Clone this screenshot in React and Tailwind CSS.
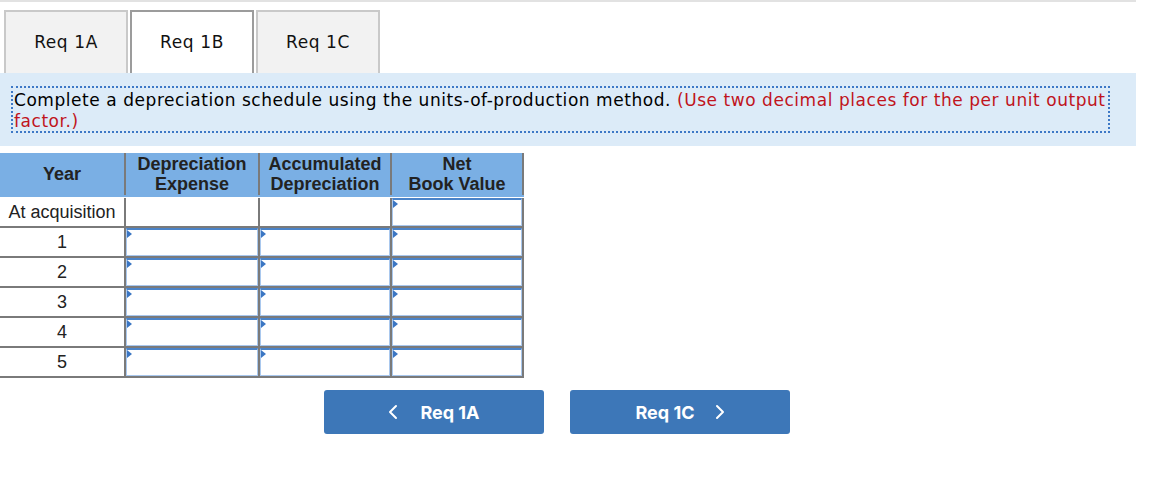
import React from "react";

const GRAY = "border-[#7a7a7a]";

const Flag = () => (
  <span className="absolute left-0 top-0 w-0 h-0 border-y-[4px] border-y-transparent border-l-[5px] border-l-[#3b76c3]" />
);

const InputBox = () => (
  <div className="relative h-full w-full border border-[#a9c8ee] border-t-2 border-t-[#4a83c8] bg-white">
    <Flag />
  </div>
);

const Tab = ({ label, active }) => (
  <div
    className={`w-[124px] h-[63px] flex items-center justify-center border-2 border-b-0 text-[17px] tracking-[0.6px] text-[#111] ${
      active ? "bg-white border-[#9c9c9c]" : "bg-[#f2f2f2] border-[#c9c9c9]"
    }`}
  >
    {label}
  </div>
);

const DataRow = ({ label, first }) => (
  <div className={`flex h-[30px] border-b-2 ${GRAY}`}>
    <div className="w-[124px] flex items-center justify-center bg-white">{label}</div>
    <div className={`w-[134px] border-l-2 ${GRAY} bg-white`}>{!first && <InputBox />}</div>
    <div className={`w-[132px] border-l-2 ${GRAY} bg-white`}>{!first && <InputBox />}</div>
    <div className={`w-[134px] border-l-2 border-r-2 ${GRAY} bg-white`}>
      <InputBox />
    </div>
  </div>
);

export default function App() {
  const verdana = { fontFamily: '"DejaVu Sans", Verdana, sans-serif' };
  return (
    <div className="w-[1152px] h-[488px] bg-white overflow-hidden" style={{ fontFamily: '"Liberation Sans", Arial, sans-serif' }}>
      <div className="h-[2px] w-[1136px] bg-[#e2e2e2]" />

      <div className="flex gap-[2px] pl-[4px] pt-[8px]" style={verdana}>
        <Tab label="Req 1A" />
        <Tab label="Req 1B" active />
        <Tab label="Req 1C" />
      </div>

      <div className="w-[1136px] h-[73px] bg-[#dcebf8] pl-[11px] pt-[13px]">
        <div
          className="w-[1099px] h-[47px] border-2 border-dotted border-[#3d78c6] px-[1px] pt-[2px] text-[17px] tracking-[0.55px] leading-[21px] text-black"
          style={verdana}
        >
          Complete a depreciation schedule using the units-of-production method.{" "}
          <span className="text-[#c0141c]">(Use two decimal places for the per unit output factor.)</span>
        </div>
      </div>

      <div className="mt-[7px] w-[524px] text-[18px] text-[#222]">
        <div className="flex h-[44px] pb-[2px] bg-[#7aafe4] font-bold leading-[20px] text-[#222]">
          <div className="w-[124px] flex items-center justify-center">Year</div>
          <div className={`w-[134px] border-l-2 ${GRAY} flex items-center justify-center text-center`}>
            Depreciation
            <br />
            Expense
          </div>
          <div className={`w-[132px] border-l-2 ${GRAY} flex items-center justify-center text-center`}>
            Accumulated
            <br />
            Depreciation
          </div>
          <div className={`w-[134px] border-l-2 border-r-2 ${GRAY} flex items-center justify-center text-center`}>
            Net
            <br />
            Book Value
          </div>
        </div>
        <div className="h-[1px]" />
        <DataRow label="At acquisition" first />
        {[1, 2, 3, 4, 5].map((n) => (
          <DataRow key={n} label={n} />
        ))}
      </div>

      <div className="flex gap-[26px] pl-[324px] mt-[12px]" style={{ fontFamily: "Inter, sans-serif" }}>
        <button className="w-[220px] h-[44px] rounded-[3px] bg-[#3d77b8] text-white font-bold text-[18px] flex items-center justify-center gap-[22px]">
          <svg width="10" height="16" viewBox="0 0 10 16" fill="none" stroke="white" strokeWidth="2" strokeLinecap="round" strokeLinejoin="round">
            <path d="M8 2 L2 8 L8 14" />
          </svg>
          <span>Req 1A</span>
        </button>
        <button className="w-[220px] h-[44px] rounded-[3px] bg-[#3d77b8] text-white font-bold text-[18px] flex items-center justify-center gap-[20px]">
          <span>Req 1C</span>
          <svg width="10" height="16" viewBox="0 0 10 16" fill="none" stroke="white" strokeWidth="2" strokeLinecap="round" strokeLinejoin="round">
            <path d="M2 2 L8 8 L2 14" />
          </svg>
        </button>
      </div>
    </div>
  );
}
